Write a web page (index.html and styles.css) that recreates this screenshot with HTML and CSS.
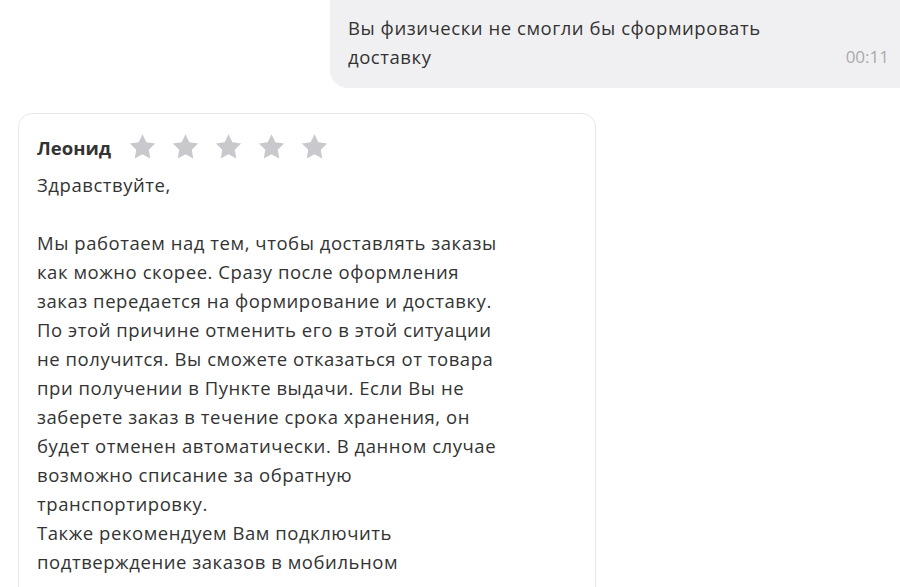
FILE: index.html
```html
<!DOCTYPE html>
<html>
<head>
    <title>Чат с поддержкой</title>
    <link rel="stylesheet" href="styles.css">
</head>
<body>
    <div class="chat">
        <div class="msg-out">
            <div class="msg-out-text">Вы физически не смогли бы сформировать доставку</div>
            <span class="msg-time">00:11</span>
        </div>

        <div class="msg-in">
            <div class="msg-head">
                <span class="msg-author">Леонид</span>
                <div class="stars">
                    <svg class="star" viewBox="0 0 24 24"><path d="M12 1.8l3.1 6.4 7 1-5.1 4.9 1.2 7L12 17.8l-6.2 3.3 1.2-7L1.9 9.2l7-1z"/></svg>
                    <svg class="star" viewBox="0 0 24 24"><path d="M12 1.8l3.1 6.4 7 1-5.1 4.9 1.2 7L12 17.8l-6.2 3.3 1.2-7L1.9 9.2l7-1z"/></svg>
                    <svg class="star" viewBox="0 0 24 24"><path d="M12 1.8l3.1 6.4 7 1-5.1 4.9 1.2 7L12 17.8l-6.2 3.3 1.2-7L1.9 9.2l7-1z"/></svg>
                    <svg class="star" viewBox="0 0 24 24"><path d="M12 1.8l3.1 6.4 7 1-5.1 4.9 1.2 7L12 17.8l-6.2 3.3 1.2-7L1.9 9.2l7-1z"/></svg>
                    <svg class="star" viewBox="0 0 24 24"><path d="M12 1.8l3.1 6.4 7 1-5.1 4.9 1.2 7L12 17.8l-6.2 3.3 1.2-7L1.9 9.2l7-1z"/></svg>
                </div>
            </div>
            <p class="msg-text">Здравствуйте,</p>
            <p class="msg-text gap">Мы работаем над тем, чтобы доставлять заказы<br>как можно скорее. Сразу после оформления<br>заказ передается на формирование и доставку.<br>По этой причине отменить его в этой ситуации<br>не получится. Вы сможете отказаться от товара<br>при получении в Пункте выдачи. Если Вы не<br>заберете заказ в течение срока хранения, он<br>будет отменен автоматически. В данном случае<br>возможно списание за обратную<br>транспортировку.<br>Также рекомендуем Вам подключить<br>подтверждение заказов в мобильном</p>
        </div>
    </div>
</body>
</html>
```

FILE: styles.css
```css
body {
    margin: 0;
    background-color: #FFF;
    font-family: "Open Sans", "Noto Sans", sans-serif;
    font-size: 18.5px;
    letter-spacing: 0.55px;
    line-height: 29px;
    color: #333;
    overflow: hidden;
}

.chat {
    display: flex;
    flex-direction: column;
}

.msg-out {
    align-self: flex-end;
    width: 570px;
    box-sizing: border-box;
    display: flex;
    align-items: flex-end;
    justify-content: space-between;
    padding: 13px 11px 17px 18px;
    background-color: #F0F0F2;
    border-radius: 0 0 0 18px;
}

.msg-out-text {
    max-width: 430px;
}

.msg-time {
    color: #AAA;
    font-size: 17px;
    letter-spacing: 0;
}

.msg-in {
    margin: 25px 0 0 18px;
    width: 578px;
    height: 600px;
    box-sizing: border-box;
    padding: 18px 18px;
    border: 1px solid #E8E8E8;
    border-radius: 14px;
}

.msg-head {
    display: flex;
    align-items: center;
    height: 30px;
    margin-bottom: 8px;
}

.msg-author {
    font-weight: bold;
    letter-spacing: 0;
    margin-right: 16px;
}

.stars {
    display: flex;
    gap: 12px;
}

.star {
    width: 31px;
    height: 30px;
    fill: #C9C9CD;
}

.msg-text {
    margin: 0;
    white-space: nowrap;
}

.msg-text.gap {
    margin-top: 29px;
}
```
